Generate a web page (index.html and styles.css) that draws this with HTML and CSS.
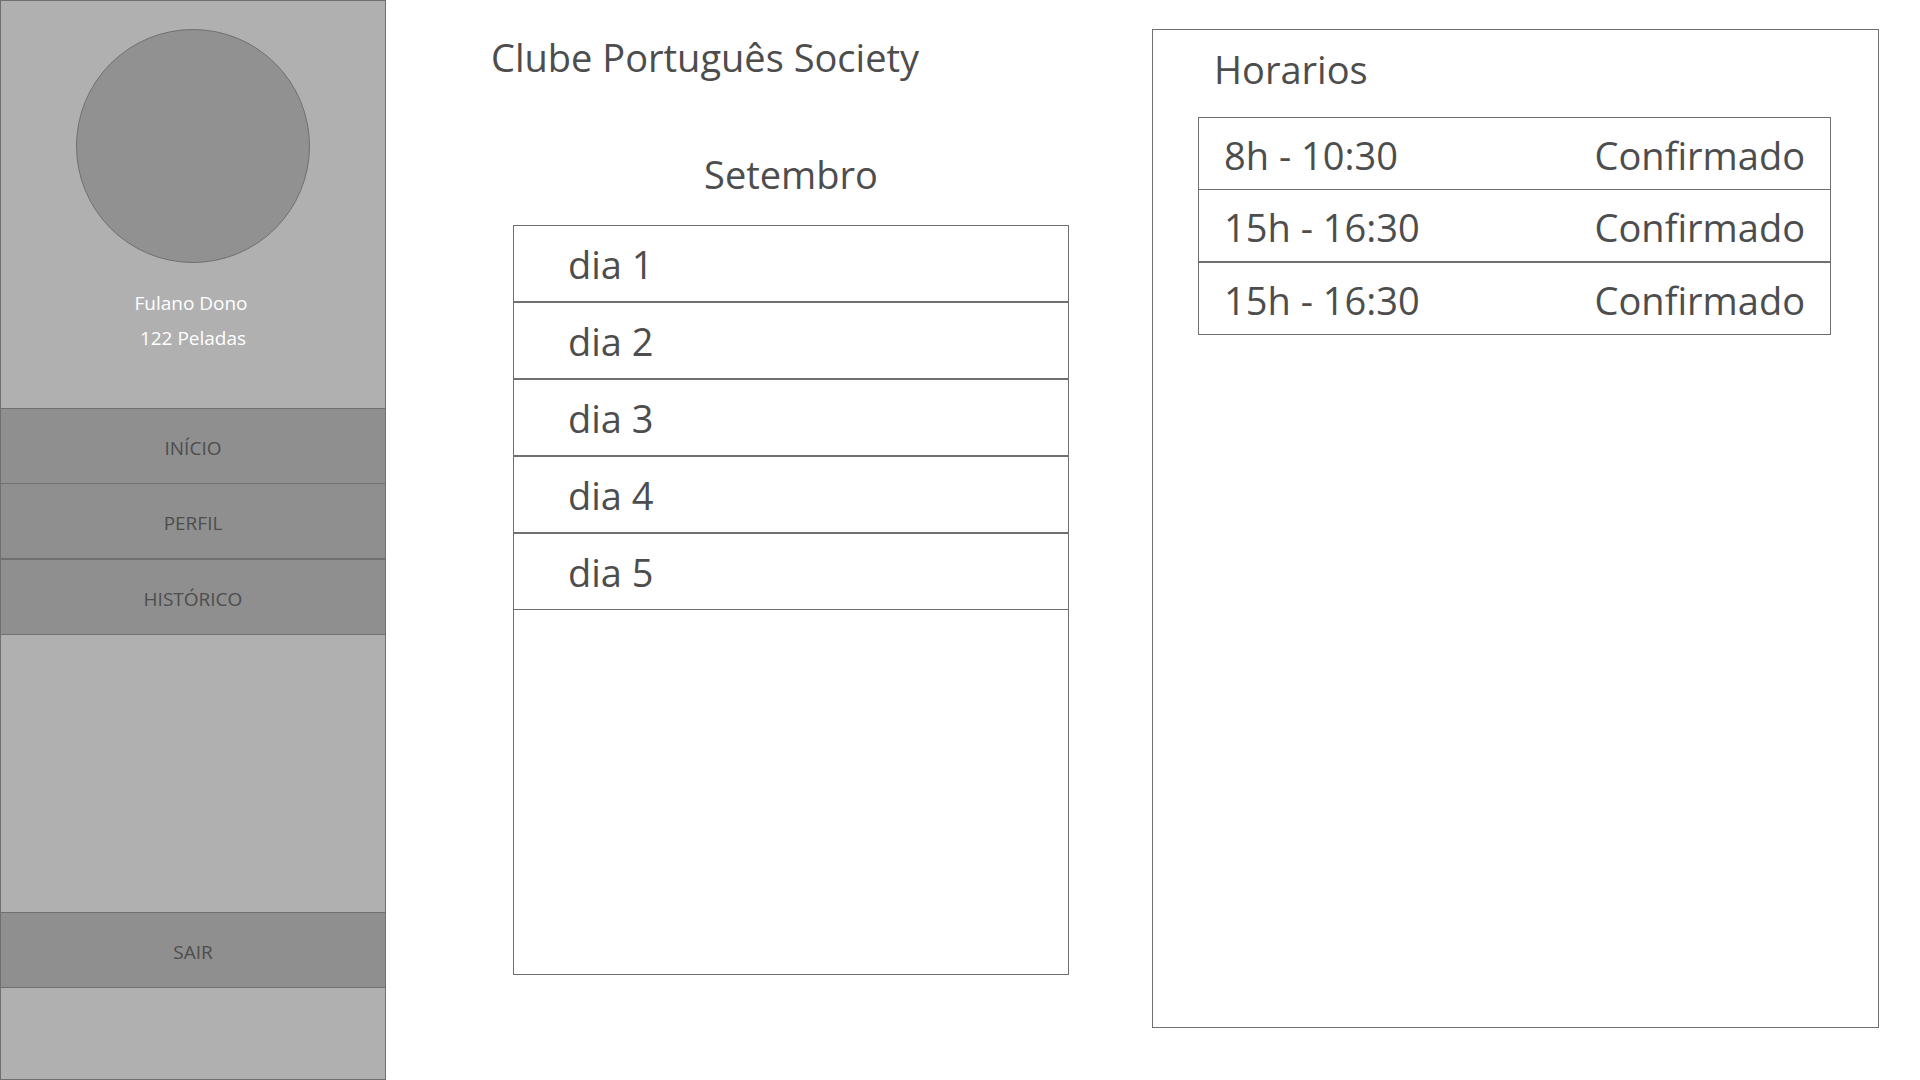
FILE: index.html
```html
<!DOCTYPE html>
<html lang="pt-BR">
<head>
  <meta charset="utf-8">
  <meta name="viewport" content="width=device-width, initial-scale=1">
  <title>Clube Português Society</title>
  <link rel="stylesheet" href="styles.css">
</head>
<body class="page">
  <aside class="sidebar">
    <div class="avatar"></div>
    <div class="user">
      <p class="user-name">Fulano Dono</p>
      <p class="user-games">122 Peladas</p>
    </div>
    <nav class="menu">
      <a class="menu-link" href="#inicio">INÍCIO</a>
      <a class="menu-link" href="#perfil">PERFIL</a>
      <a class="menu-link menu-link-split" href="#historico">HISTÓRICO</a>
    </nav>
    <button class="logout" type="button">SAIR</button>
  </aside>

  <main class="content">
    <section class="club">
      <h1 class="heading">Clube Português Society</h1>
      <div class="calendar">
        <h2 class="heading month">Setembro</h2>
        <ul class="days">
          <li><button class="day" type="button">dia 1</button></li>
          <li><button class="day" type="button">dia 2</button></li>
          <li><button class="day" type="button">dia 3</button></li>
          <li><button class="day" type="button">dia 4</button></li>
          <li><button class="day" type="button">dia 5</button></li>
        </ul>
      </div>
    </section>

    <section class="schedule">
      <h2 class="heading schedule-title" id="schedule-title">Horarios</h2>
      <table class="slots" aria-labelledby="schedule-title">
        <tbody>
          <tr><td>8h - 10:30</td><td class="status">Confirmado</td></tr>
          <tr><td>15h - 16:30</td><td class="status">Confirmado</td></tr>
          <tr><td>15h - 16:30</td><td class="status">Confirmado</td></tr>
        </tbody>
      </table>
    </section>
  </main>
</body>
</html>
```

FILE: styles.css
```css
:root {
  --line: #707070;
  --ink: #4d4d4d;
  --sidebar: #b0b0b0;
  --button: #8f8f8f;
}

* {
  box-sizing: border-box;
}

.page {
  display: grid;
  grid-template-columns: 386px 1fr;
  min-height: 100vh;
  margin: 0;
  background: #fff;
  color: var(--ink);
  font-family: "Open Sans", "Noto Sans", sans-serif;
  font-size: 38px;
  line-height: 52px;
}

/* Sidebar */

.sidebar {
  display: flex;
  flex-direction: column;
  padding: 28px 0 91px;
  border: 1px solid var(--line);
  background: var(--sidebar);
  font-size: 19px;
  line-height: 35px;
}

.avatar {
  width: 234px;
  height: 234px;
  margin: 0 auto;
  border: 1px solid var(--line);
  border-radius: 50%;
  background: #919191;
}

.user {
  margin: 23px 0 52px;
  color: #fff;
  text-align: center;
}

.user-name,
.user-games {
  margin: 0;
}

.user-name {
  padding-right: 4px;
}

.menu {
  display: flex;
  flex-direction: column;
  border-bottom: 1px solid var(--line);
}

.menu-link,
.logout {
  display: flex;
  align-items: center;
  justify-content: center;
  height: 75px;
  padding: 4px 0 0;
  border: 0 solid var(--line);
  border-top-width: 1px;
  background: var(--button);
  color: var(--ink);
  font: inherit;
  text-decoration: none;
}

.menu-link-split {
  height: 76px;
  border-top-width: 2px;
}

.logout {
  height: 76px;
  margin-top: auto;
  border-bottom-width: 1px;
}

/* Content */

.content {
  display: grid;
  grid-template-columns: 578fr 727fr;
  column-gap: 83px;
  padding: 29px 41px 52px 105px;
}

.heading {
  margin: 0;
  font-size: inherit;
  font-weight: 400;
}

.club {
  display: flex;
  flex-direction: column;
  gap: 65px;
  padding: 2px 0 53px;
}

.calendar {
  display: flex;
  flex: 1;
  flex-direction: column;
  gap: 25px;
  margin-left: 22px;
}

.month {
  text-align: center;
}

.days {
  flex: 1;
  margin: 0;
  padding: 0;
  border: 1px solid var(--line);
  border-top: 0;
  list-style: none;
}

.day {
  display: block;
  width: 100%;
  height: 77px;
  padding: 0 54px;
  border: 1px solid var(--line);
  border-width: 1px 0;
  background: none;
  color: inherit;
  font: inherit;
  text-align: left;
}

.schedule {
  padding: 13px 47px 24px 45px;
  border: 1px solid var(--line);
}

.schedule-title {
  padding-left: 16px;
}

.slots {
  width: 100%;
  margin-top: 22px;
  border: 1px solid var(--line);
  border-top: 0;
  border-spacing: 0;
}

.slots td {
  height: 72px;
  padding: 2px 25px 0;
  border-top: 1px solid var(--line);
}

.slots tr:last-child td {
  height: 73px;
  border-top-width: 2px;
}

.slots .status {
  text-align: right;
}
```
